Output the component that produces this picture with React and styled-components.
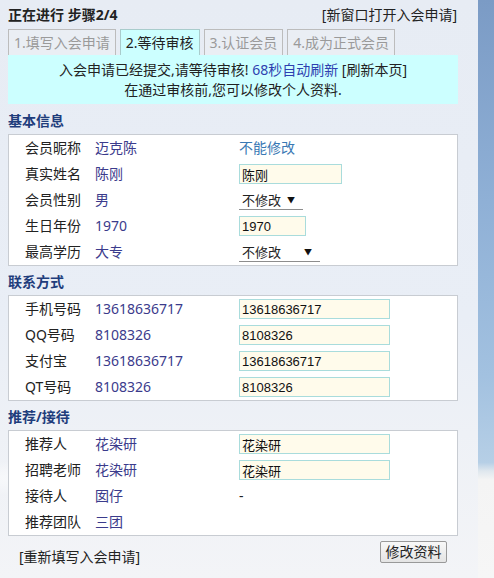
import React from 'react'
import styled, { createGlobalStyle } from 'styled-components'

const GlobalStyle = createGlobalStyle`
    html, body {
        margin: 0;
        padding: 0;
    }
    body {
        font-family: "Noto Sans", "Noto Sans CJK SC", sans-serif;
        font-size: 14px;
        line-height: 20px;
        color: #222;
    }
`

const basicRows = [
    { label: '会员昵称', value: '迈克陈', fixed: '不能修改' },
    { label: '真实姓名', value: '陈刚', input: '陈刚', inputWidth: 103 },
    { label: '会员性别', value: '男', select: '不修改', selectWidth: 64 },
    { label: '生日年份', value: '1970', input: '1970', inputWidth: 67 },
    { label: '最高学历', value: '大专', select: '不修改', selectWidth: 81 },
]

const contactRows = [
    { label: '手机号码', value: '13618636717', input: '13618636717', inputWidth: 151 },
    { label: 'QQ号码', value: '8108326', input: '8108326', inputWidth: 151 },
    { label: '支付宝', value: '13618636717', input: '13618636717', inputWidth: 151 },
    { label: 'QT号码', value: '8108326', input: '8108326', inputWidth: 151 },
]

const referRows = [
    { label: '推荐人', value: '花染研', input: '花染研', inputWidth: 151 },
    { label: '招聘老师', value: '花染研', input: '花染研', inputWidth: 151 },
    { label: '接待人', value: '囡仔', plain: '-' },
    { label: '推荐团队', value: '三团' },
]

const tabs = ['1.填写入会申请', '2.等待审核', '3.认证会员', '4.成为正式会员']

function Field({ row }) {
    if (row.fixed) return <FixedText>{row.fixed}</FixedText>
    if (row.input) return <TextInput $w={row.inputWidth} defaultValue={row.input} />
    if (row.select) {
        return (
            <SelectBox $w={row.selectWidth}>
                <span>{row.select}</span>
                <Arrow>▼</Arrow>
            </SelectBox>
        )
    }
    if (row.plain) return <span>{row.plain}</span>
    return <span />
}

function Section({ title, rows, first }) {
    return (
        <>
            <SectionTitle $first={first}>{title}</SectionTitle>
            <Box>
                {rows.map((row) => (
                    <Row key={row.label}>
                        <Label>{row.label}</Label>
                        <Value>{row.value}</Value>
                        <Field row={row} />
                    </Row>
                ))}
            </Box>
        </>
    )
}

function App() {
    return (
        <Page>
            <GlobalStyle />
            <Panel>
                {/* step header */}
                <TitleBar>
                    <Title>正在进行 步骤2/4</Title>
                    <span>[新窗口打开入会申请]</span>
                </TitleBar>
                <Tabs>
                    {tabs.map((t, i) => (
                        <Tab key={t} $active={i === 1}>{t}</Tab>
                    ))}
                </Tabs>
                <Notice>
                    <div>
                        入会申请已经提交,请等待审核! <Refresh>68秒自动刷新</Refresh> [刷新本页]
                    </div>
                    <div>在通过审核前,您可以修改个人资料.</div>
                </Notice>

                <Section title="基本信息" rows={basicRows} first />
                <Section title="联系方式" rows={contactRows} />
                <Section title="推荐/接待" rows={referRows} />

                <Footer>
                    <ResetLink>[重新填写入会申请]</ResetLink>
                    <SubmitBtn>修改资料</SubmitBtn>
                </Footer>
            </Panel>
            <Sky />
        </Page>
    )
}

//style
const Page = styled.div`
    display: flex;
    width: 494px;
    height: 578px;
    overflow: hidden;
`
const Panel = styled.div`
    width: 478px;
    flex-shrink: 0;
    box-sizing: border-box;
    padding: 0 20px 0 8px;
    background:
        radial-gradient(ellipse 160px 18px at 60px 478px, rgba(255,255,255,0.7), rgba(255,255,255,0) 100%),
        linear-gradient(180deg, #e7ecf4 0%, #e9eef6 55%, #eef1f6 75%, #f3f4f7 100%);
`
const Sky = styled.div`
    flex: 1;
    background: linear-gradient(180deg, #7b9bc5 0%, #8fb0d6 35%, #a2c1e0 65%, #b6cfe6 80%, #dfe7ee 81.5%, #f4f4f4 83%, #f6f6f6 100%);
`
const TitleBar = styled.div`
    height: 29px;
    display: flex;
    justify-content: space-between;
    align-items: center;
    padding-right: 1px;
`
const Title = styled.span`
    font-weight: bold;
`
const Tabs = styled.div`
    display: flex;
    gap: 4px;
    height: 26px;
`
const Tab = styled.div`
    box-sizing: border-box;
    height: 26px;
    padding: 0 5px;
    display: flex;
    align-items: center;
    border: 1px solid ${(p) => (p.$active ? '#a9cccc' : '#bcbcbc')};
    border-bottom: none;
    background: ${(p) => (p.$active ? '#ccffff' : '#eaeef4')};
    color: ${(p) => (p.$active ? '#222' : '#9a9a9a')};
`
const Notice = styled.div`
    background: #ccffff;
    height: 49px;
    box-sizing: border-box;
    padding-top: 5px;
    text-align: center;
    line-height: 20px;
`
const Refresh = styled.span`
    color: #2e3fb0;
`
const SectionTitle = styled.div`
    height: ${(p) => (p.$first ? 30 : 29)}px;
    box-sizing: border-box;
    padding-top: ${(p) => (p.$first ? 7 : 6)}px;
    line-height: 20px;
    font-weight: bold;
    color: #1f3d7c;
`
const Box = styled.div`
    background: #fff;
    border: 1px solid #c8ccd2;
    padding-left: 16px;
`
const Row = styled.div`
    display: grid;
    grid-template-columns: 70px 144px 1fr;
    align-items: center;
    height: 26px;
`
const Label = styled.span`
    color: #222;
`
const Value = styled.span`
    color: #3b3b8c;
`
const FixedText = styled.span`
    color: #3a79b4;
`
const TextInput = styled.input`
    width: ${(p) => p.$w}px;
    height: 20px;
    box-sizing: border-box;
    border: 1px solid #a9dcdc;
    background: #fffbeb;
    padding: 0 2px;
    font-family: "Liberation Sans", "Noto Sans CJK SC", sans-serif;
    font-size: 13px;
    color: #111;
    outline: none;
`
const SelectBox = styled.div`
    width: ${(p) => p.$w}px;
    height: 20px;
    box-sizing: border-box;
    display: flex;
    justify-content: space-between;
    align-items: center;
    padding: 0 8px 0 3px;
    border-bottom: 1px solid #8d8d8d;
    font-size: 13px;
`
const Arrow = styled.span`
    font-size: 8px;
    color: #111;
`
const Footer = styled.div`
    display: flex;
    justify-content: space-between;
    align-items: flex-start;
    padding: 5px 11px 0 11px;
`
const ResetLink = styled.span`
    padding-top: 6px;
`
const SubmitBtn = styled.button`
    height: 22px;
    width: 67px;
    padding: 0;
    border: 1px solid #999;
    border-radius: 2px;
    background: linear-gradient(180deg, #f8f8f8 0%, #e4e4e4 100%);
    font-family: "Noto Sans", "Noto Sans CJK SC", sans-serif;
    font-size: 14px;
    color: #222;
    line-height: 20px;
`

export default App
